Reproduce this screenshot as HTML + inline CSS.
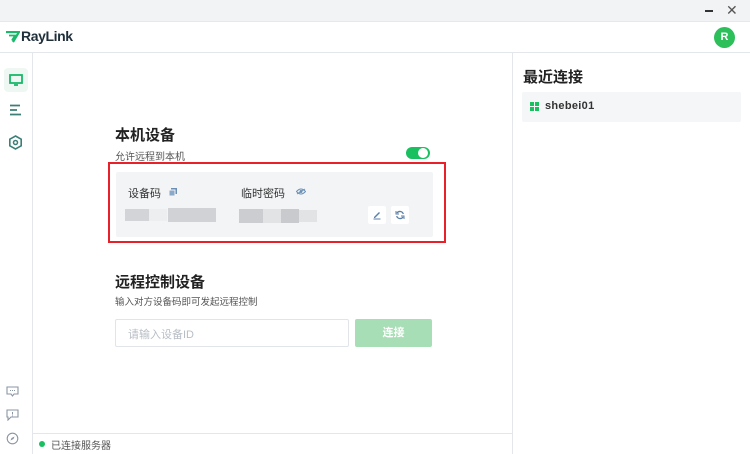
<!DOCTYPE html>
<html><head><meta charset="utf-8"><style>
*{margin:0;padding:0;box-sizing:border-box}
body{width:750px;height:454px;overflow:hidden;background:#fff;font-family:"Liberation Sans","Noto Sans CJK SC",sans-serif;position:relative;color:#222}
.abs{position:absolute}
</style></head><body>
<div class="abs" style="left:0;top:0;width:750px;height:22px;background:#f2f3f5;border-bottom:1px solid #e6e8eb"></div>
<div class="abs" style="left:705px;top:10px;width:8px;height:2px;background:#333"></div>
<div class="abs" style="left:726px;top:2px;font-size:14px;color:#555">✕</div>
<div class="abs" style="left:0;top:52px;width:750px;height:1px;background:#e3e6ea"></div>
<svg class="abs" style="left:6px;top:31px" width="14" height="12" viewBox="0 0 14 12"><path d="M0 1h13l-6 10" fill="none" stroke="#19b86a" stroke-width="2.2"/><path d="M3 4.5h6l-3 5" fill="none" stroke="#19b86a" stroke-width="1.8"/></svg>
<div class="abs" style="left:21px;top:28px;font-size:14px;font-weight:bold;color:#1f2f3a;letter-spacing:-0.4px">RayLink</div>
<div class="abs" style="left:714px;top:27px;width:21px;height:21px;border-radius:50%;background:#2cbf5a;color:#fff;font-weight:bold;font-size:11px;text-align:center;line-height:21px">R</div>
<div class="abs" style="left:32px;top:53px;width:1px;height:401px;background:#e3e6ea"></div>
<div class="abs" style="left:4px;top:68px;width:24px;height:24px;border-radius:4px;background:#eef7f1"></div>
<svg class="abs" style="left:9px;top:74px" width="14" height="12" viewBox="0 0 14 12"><rect x="1" y="1" width="12" height="8" fill="none" stroke="#19b86a" stroke-width="1.8"/><path d="M5 11h4" stroke="#19b86a" stroke-width="1.8"/></svg>
<svg class="abs" style="left:9px;top:104px" width="14" height="12" viewBox="0 0 14 12"><path d="M1 1.5h10M1 6h7M1 10.5h11" stroke="#3b7f76" stroke-width="1.8"/></svg>
<svg class="abs" style="left:8px;top:135px" width="15" height="15" viewBox="0 0 15 15"><path d="M7.5 1l5.7 3.2v6.6L7.5 14 1.8 10.8V4.2z" fill="none" stroke="#3b7f76" stroke-width="1.6"/><circle cx="7.5" cy="7.5" r="2" fill="none" stroke="#3b7f76" stroke-width="1.5"/></svg>
<svg class="abs" style="left:6px;top:386px" width="13" height="12" viewBox="0 0 13 12"><path d="M1 1h11v7H8l-1.5 2L5 8H1z" fill="none" stroke="#8a96a3" stroke-width="1.1"/><path d="M4 4.5h5" stroke="#8a96a3" stroke-dasharray="1 1"/></svg>
<svg class="abs" style="left:6px;top:409px" width="13" height="12" viewBox="0 0 13 12"><path d="M1 1h11v7H5l-3 3V8H1z" fill="none" stroke="#8a96a3" stroke-width="1.1"/><path d="M6.5 3v2.5M6.5 6.5v.8" stroke="#8a96a3"/></svg>
<svg class="abs" style="left:6px;top:432px" width="13" height="13" viewBox="0 0 13 13"><circle cx="6.5" cy="6.5" r="5.3" fill="none" stroke="#8a96a3" stroke-width="1.1"/><path d="M8.5 4.5L5.5 6 4.5 8.5 7.5 7z" fill="#8a96a3"/></svg>
<div class="abs" style="left:33px;top:433px;width:480px;height:1px;background:#e3e6ea"></div>
<div class="abs" style="left:39px;top:441px;width:6px;height:6px;border-radius:50%;background:#19c060"></div>
<div class="abs" style="left:51px;top:437px;font-size:10px;color:#555">已连接服务器</div>
<div class="abs" style="left:512px;top:53px;width:1px;height:401px;background:#e3e6ea"></div>
<div class="abs" style="left:523px;top:66px;font-size:15px;font-weight:bold;color:#222">最近连接</div>
<div class="abs" style="left:522px;top:92px;width:219px;height:30px;background:#f5f6f8;border-radius:2px"></div>
<svg class="abs" style="left:530px;top:102px" width="9" height="9" viewBox="0 0 9 9"><rect x="0" y="0" width="4" height="4" fill="#19c060"/><rect x="5" y="0" width="4" height="4" fill="#19c060"/><rect x="0" y="5" width="4" height="4" fill="#19c060"/><rect x="5" y="5" width="4" height="4" fill="#19c060"/></svg>
<div class="abs" style="left:545px;top:100px;font-size:11px;font-weight:bold;color:#333;letter-spacing:0.3px">shebei01</div>
<div class="abs" style="left:115px;top:124px;font-size:15px;font-weight:bold;color:#222">本机设备</div>
<div class="abs" style="left:115px;top:148px;font-size:10px;color:#555">允许远程到本机</div>
<div class="abs" style="left:406px;top:147px;width:24px;height:12px;border-radius:6px;background:#19c060"></div>
<div class="abs" style="left:418px;top:148px;width:10px;height:10px;border-radius:50%;background:#fff"></div>
<div class="abs" style="left:108px;top:162px;width:338px;height:81px;border:2px solid #e8202a"></div>
<div class="abs" style="left:116px;top:172px;width:317px;height:65px;background:#f3f4f6;border-radius:2px"></div>
<div class="abs" style="left:128px;top:185px;font-size:11px;color:#333">设备码</div>
<svg class="abs" style="left:169px;top:188px" width="8" height="8" viewBox="0 0 8 8"><rect x="2" y="0" width="6" height="6" fill="#6b8fb5"/><rect x="0" y="2" width="6" height="6" fill="#8aa9c8" stroke="#f3f4f6"/></svg>
<div class="abs" style="left:241px;top:185px;font-size:11px;color:#333">临时密码</div>
<svg class="abs" style="left:296px;top:188px" width="10" height="7" viewBox="0 0 10 7"><path d="M0.5 3.5Q5 -1.5 9.5 3.5Q5 8.5 0.5 3.5z" fill="none" stroke="#6b8fb5"/><circle cx="5" cy="3.5" r="1.5" fill="#6b8fb5"/><path d="M1 6L9 1" stroke="#6b8fb5"/></svg>
<div class="abs" style="left:125px;top:209px;width:24px;height:12px;background:#d2d4d7"></div>
<div class="abs" style="left:149px;top:209px;width:18px;height:12px;background:#eceef0"></div>
<div class="abs" style="left:168px;top:208px;width:48px;height:14px;background:#d0d2d5"></div>
<div class="abs" style="left:239px;top:209px;width:24px;height:14px;background:#cbcdd0"></div>
<div class="abs" style="left:263px;top:209px;width:18px;height:14px;background:#e1e3e5"></div>
<div class="abs" style="left:281px;top:209px;width:18px;height:14px;background:#c8cacd"></div>
<div class="abs" style="left:299px;top:210px;width:18px;height:12px;background:#e1e3e5"></div>
<div class="abs" style="left:368px;top:206px;width:18px;height:18px;background:#fff;border-radius:2px"></div>
<svg class="abs" style="left:372px;top:210px" width="10" height="10" viewBox="0 0 10 10"><path d="M2 7L7 2l1 1-5 5H2z" fill="#5b7fa8"/><path d="M1.5 9h7" stroke="#5b7fa8"/></svg>
<div class="abs" style="left:391px;top:206px;width:18px;height:18px;background:#fff;border-radius:2px"></div>
<svg class="abs" style="left:395px;top:210px" width="10" height="10" viewBox="0 0 10 10"><path d="M8.3 4A3.5 3.5 0 0 0 2 3M1.7 6A3.5 3.5 0 0 0 8 7" fill="none" stroke="#5b7fa8" stroke-width="1.3"/><path d="M1 1v3h3M9 9V6H6" fill="none" stroke="#5b7fa8" stroke-width="1"/></svg>
<div class="abs" style="left:115px;top:271px;font-size:15px;font-weight:bold;color:#222">远程控制设备</div>
<div class="abs" style="left:115px;top:294px;font-size:9.5px;color:#555">输入对方设备码即可发起远程控制</div>
<div class="abs" style="left:115px;top:319px;width:234px;height:28px;border:1px solid #e1e4e8;border-radius:2px"></div>
<div class="abs" style="left:128px;top:326px;font-size:11px;color:#b8bec6">请输入设备ID</div>
<div class="abs" style="left:355px;top:319px;width:77px;height:28px;background:#a8deb5;border-radius:2px;color:#fff;font-size:11px;text-align:center;line-height:28px;font-weight:bold">连接</div>
</body></html>
